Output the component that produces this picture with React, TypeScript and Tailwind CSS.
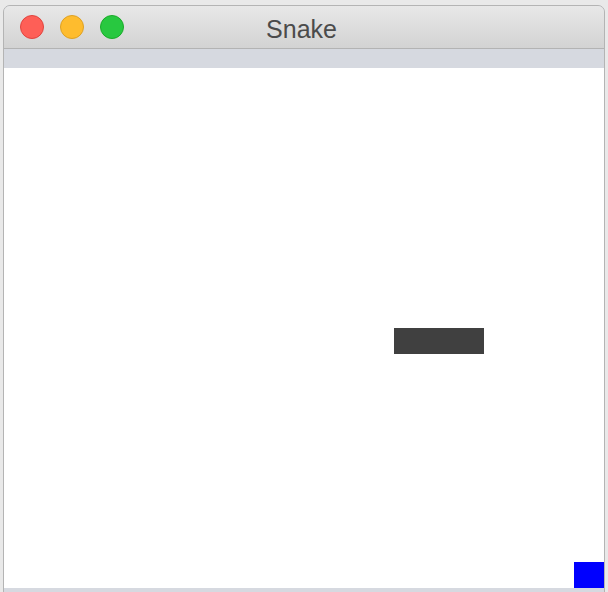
export default function App() {
    return (
        <div className="w-[608px] h-[592px] overflow-hidden bg-[#e9e9e9] pt-[5px] pl-[3px]">
            {/* Window */}
            <div className="w-[602px] h-[600px] flex flex-col rounded-t-[7px] border border-[#b4b4b4] bg-[#d6d9e0] overflow-hidden">
                {/* Title bar */}
                <div className="relative h-[43px] flex items-center border-b border-[#b3b3b3] bg-gradient-to-b from-[#e8e8e8] to-[#d3d3d3]">
                    <div className="flex items-center gap-[16px] pl-[16px]">
                        <span className="w-[24px] h-[24px] rounded-full bg-[#fe5f57] border border-[#e0443e]" />
                        <span className="w-[24px] h-[24px] rounded-full bg-[#febc2e] border border-[#dea123]" />
                        <span className="w-[24px] h-[24px] rounded-full bg-[#28c840] border border-[#1aab29]" />
                    </div>
                    <div className="absolute inset-0 flex items-center justify-center pt-[4px]">
                        <span className="text-[25px] leading-none text-[#4b4b4b] font-['Liberation_Sans',Arial,sans-serif] pr-[5px]">
                            Snake
                        </span>
                    </div>
                </div>
                {/* Toolbar strip */}
                <div className="h-[19px] bg-[#d6d9e0]" />
                {/* Game canvas */}
                <div className="relative h-[520px] bg-white">
                    <div className="absolute left-[390px] top-[260px] w-[90px] h-[26px] bg-[#404040]" />
                    <div className="absolute left-[570px] top-[494px] w-[30px] h-[26px] bg-[#0000ff]" />
                </div>
            </div>
        </div>
    );
}
